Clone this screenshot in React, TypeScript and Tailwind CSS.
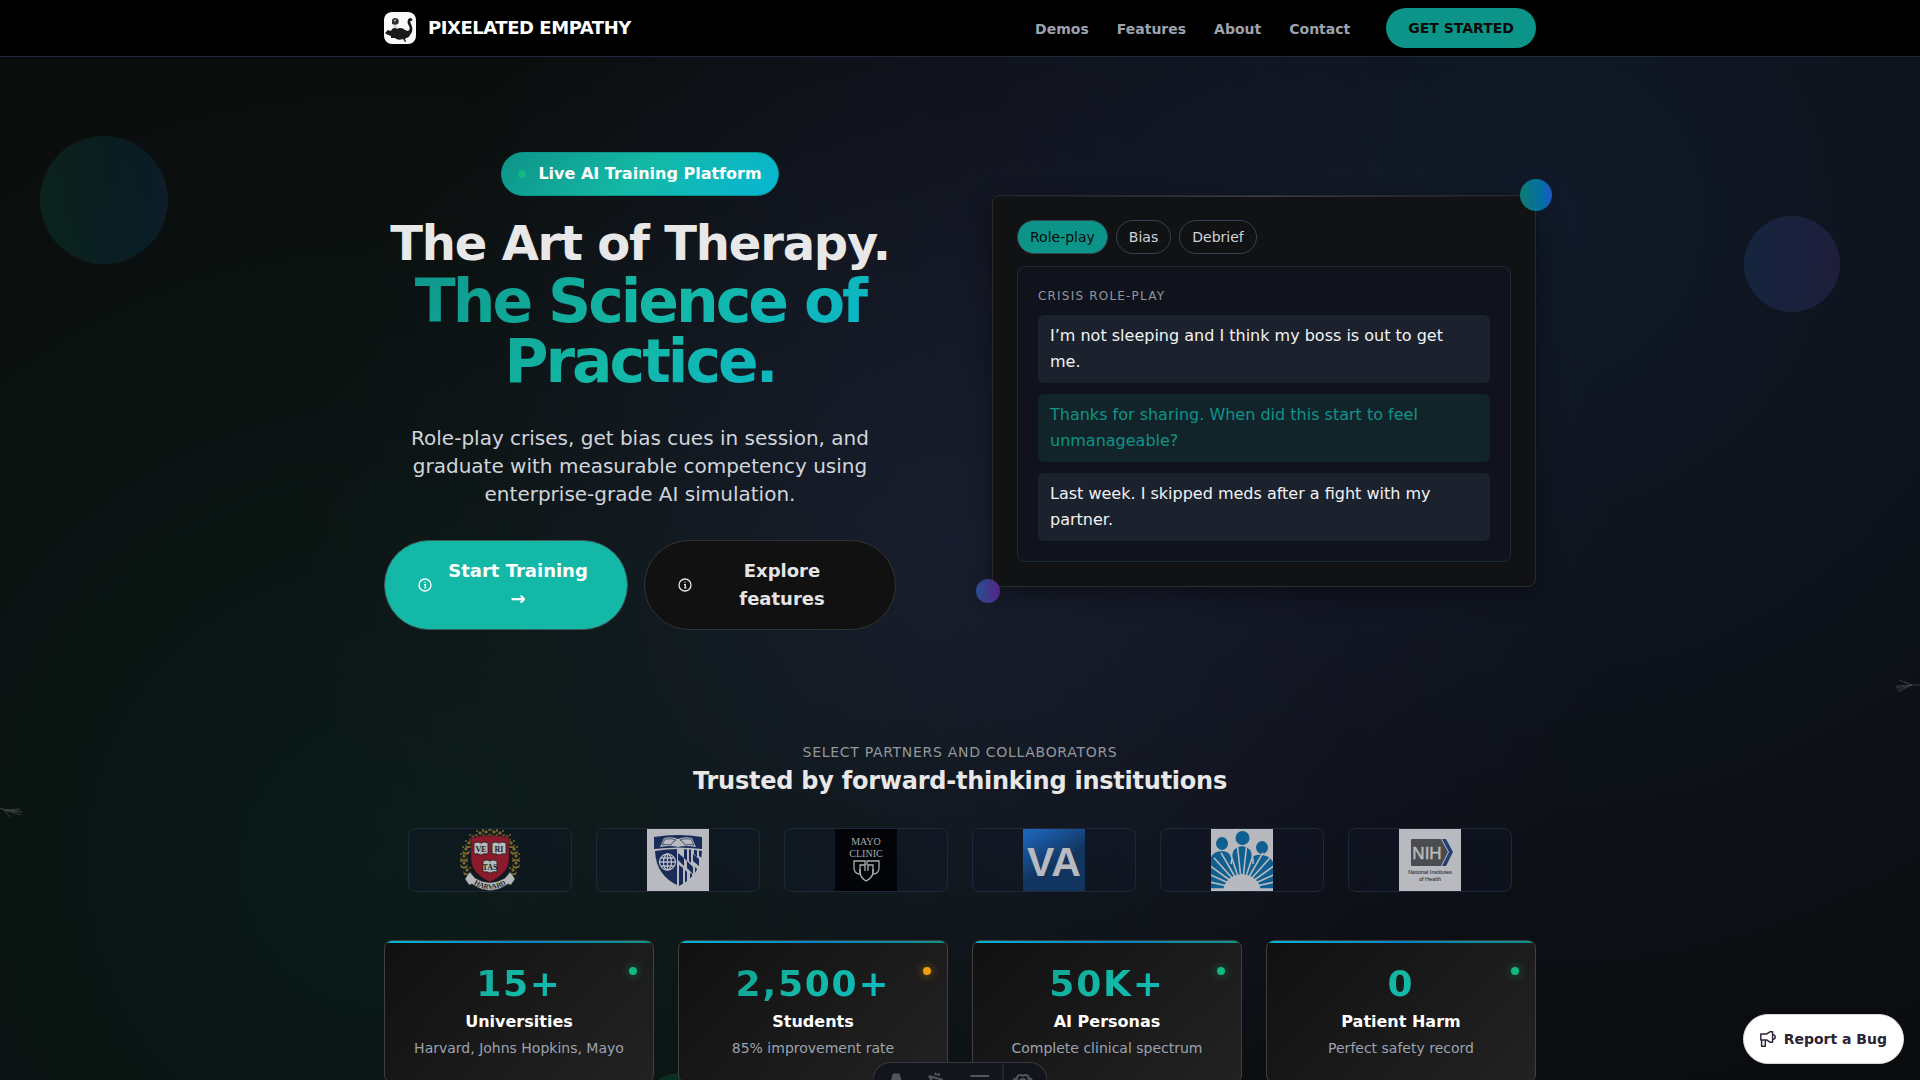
import React from "react";

const TEXT_GRADIENT = "bg-[linear-gradient(135deg,#0d9488_0%,#14b8a6_50%,#06b6d4_100%)] bg-clip-text text-transparent";

function BrandMark() {
  return (
    <svg viewBox="0 0 32 32" className="size-8 rounded-lg bg-[#f8fafb]" aria-hidden="true">
      <g fill="#1b1819">
        <path d="M1 21l3-3 3 1c1-3 4-4 6-2 3-2 6-1 8 1l3 1c2-1 2-3 1-5-2-3-2-7 1-8 2 0 3 2 2 3-2-1-2 1-1 3 2 4 2 8-1 11-1 2-2 3-4 3l-1 1 1 3-1 0-2-3c-3 1-6 1-8-1l-4 0 0-2c-3-1-5-2-6-3Z" />
        <path d="M8 9c0-3 3-4 6-2 1 1 1 4 0 5-2 1-4 1-6 0Z" opacity="0.9" />
        <path d="M10 8l2-1 0 2-2 1Z" fill="#9a9a9a" />
        <path d="M9 13l4 0 1 4-4 1Z" opacity="0.15" />
      </g>
    </svg>
  );
}

function InfoIcon() {
  return (
    <svg viewBox="0 0 16 16" className="size-4 shrink-0" fill="none" stroke="currentColor" strokeWidth="1.3" aria-hidden="true">
      <circle cx="8" cy="8" r="6" />
      <path d="M7 7.6h1.3v3.2M7.2 10.8h2.2" />
      <circle cx="8" cy="5.3" r="0.7" fill="currentColor" stroke="none" />
    </svg>
  );
}

function Laurel({ x, y }: { x: number; y: number }) {
  return (
    <g transform={`translate(${x} ${y})`}>
      <circle r="1.7" />
      <circle cx="-3" cy="-2" r="1" />
      <circle cx="3" cy="-2" r="1" />
      <path d="M-4 1q4 5 8 0l-1 4h-6Z" />
    </g>
  );
}

function HarvardLogo() {
  const books: [number, number, string][] = [
    [21, 19, "VE"],
    [39, 19, "RI"],
    [30, 37, "TAS"],
  ];
  const left: [number, number][] = [[9, 14], [6, 20], [4, 27], [4, 34], [7, 41], [13, 8], [20, 4], [26, 3]];
  return (
    <svg viewBox="0 0 60 62" className="h-[62px] w-[62px]" role="img" aria-label="Harvard">
      <g fill="#7b662d">
        {left.map(([x, y]) => (
          <React.Fragment key={`${x}-${y}`}>
            <Laurel x={x} y={y} />
            <Laurel x={60 - x} y={y} />
          </React.Fragment>
        ))}
      </g>
      <path d="M11 8q6 1 9-1h20q3 2 9 1v22q0 14-19 23Q11 44 11 30Z" fill="#8b1a2c" stroke="#4e1420" strokeWidth="0.8" />
      {books.map(([x, y, word]) => (
        <g key={word}>
          <path d={`M${x - 7} ${y - 5}q4-2 7 0q3-2 7 0v11q-4-1-7 1q-3-2-7-1Z`} fill="#b9bcbe" stroke="#252525" strokeWidth="0.9" />
          <path d={`M${x} ${y - 5}v12`} stroke="#777" strokeWidth="0.5" />
          <text x={x} y={y + 3.5} textAnchor="middle" fontSize="8" fontWeight="700" fontFamily="Liberation Serif, serif" fill="#222">
            {word}
          </text>
        </g>
      ))}
      <path d="M10 43q-3 3-5 7l4 6 3-1q18 13 36 0l3 1 4-6q-2-4-5-7l-5 6q-15 9-30 0Z" fill="#b5b8ba" stroke="#2c2c2c" strokeWidth="0.6" />
      <path id="harvard-ribbon" d="M11 53q19 14 38 0" fill="none" />
      <text fontSize="7" fontWeight="700" fontFamily="Liberation Serif, serif" fill="#222" textAnchor="middle">
        <textPath href="#harvard-ribbon" startOffset="50%">HARVARD</textPath>
      </text>
    </svg>
  );
}

function HopkinsLogo() {
  return (
    <svg viewBox="0 0 62 62" className="size-[62px] bg-[#b8babf]" role="img" aria-label="Johns Hopkins">
      <clipPath id="hopkins-shield">
        <path d="M8 22q24-4 47 0-1 24-23 35Q9 47 8 22Z" />
      </clipPath>
      <path d="M7 8q24-4 48 0v12q-24-3-48 0Z" fill="#192b59" />
      <path d="M17 9q8-2 14 1 7-3 14-1l4 9q-11-2-18 0-7-2-18 0Z" fill="#b8babf" />
      <path d="M18 10q7-1 11 1-4 2-5 5-5-1-9 0ZM44 10q-7-1-11 1 4 2 5 5 5-1 9 0Z" fill="none" stroke="#192b59" strokeWidth="0.7" />
      <g clipPath="url(#hopkins-shield)">
        <rect x="7" y="20" width="23" height="40" fill="#192b59" />
        <rect x="31.500" y="20" width="25" height="40" fill="#b8babf" />
        <g fill="#192b59">
          <path d="M32 36l4 3v20h-4Z" />
          <path d="M37 20h3v12l-3-3ZM42 20h2v14l-2-2ZM47 20h3v8l-3-3ZM52 20h4v10l-4-3Z" />
          <path d="M31 24l6 5v8l-6-6ZM40 32l6 6v7l-6-6ZM46 25l6 5v7l-6-5Z" />
          <path d="M38 41l2 2v13h-2ZM43 44l2 1v10h-2ZM48 38l2 2v12h-2Z" />
        </g>
      </g>
      <g fill="none" stroke="#b8babf" strokeWidth="1.300">
        <circle cx="20.500" cy="33" r="8" />
        <ellipse cx="20.500" cy="33" rx="4" ry="8" />
        <path d="M20.500 25v16M12.500 33h16M14 29h13M14 37h13" />
      </g>
    </svg>
  );
}

function MayoLogo() {
  return (
    <svg viewBox="0 0 62 62" className="size-[62px] bg-[#030407]" role="img" aria-label="Mayo Clinic">
      <g fill="#a9abae" fontFamily="Liberation Serif, serif" fontSize="10" textAnchor="middle">
        <text x="31" y="16">MAYO</text>
        <text x="31" y="28">CLINIC</text>
      </g>
      <g fill="none" stroke="#a9abae" strokeWidth="1.300">
        <path d="M30 36V32H19v7q0 5 5 6M32 36V32h12v7q0 5-5 6" />
        <path d="M25 46V36h5v6M38 46V36h-5v6" />
        <path d="M25 40v4q1 5 6 8 6-3 7-8v-4" />
      </g>
    </svg>
  );
}

function VaLogo() {
  return (
    <svg viewBox="0 0 62 62" className="size-[62px] bg-[linear-gradient(150deg,#1c67bd_0%,#1b5ca9_15%,#12355f_55%,#12355f_100%)]" role="img" aria-label="VA">
      <text x="31" y="47" textAnchor="middle" fontFamily="Liberation Sans, sans-serif" fontWeight="700" fontSize="41" fill="#b8babf">
        VA
      </text>
    </svg>
  );
}

function PeopleLogo() {
  const rays = [0, 12, 24, 36, 48, 60, 72, 84, 96, 108, 120, 132, 144, 156, 168, 180];
  return (
    <svg viewBox="0 0 62 62" className="size-[62px] bg-[#b8b9bf]" role="img" aria-label="Community health">
      <g fill="#0f6090">
        <ellipse cx="31.500" cy="9" rx="7" ry="7" />
        <ellipse cx="11" cy="14.500" rx="6" ry="6.500" />
        <ellipse cx="51" cy="18.500" rx="6" ry="6.500" />
        <path d="M0 28q3-6 11-6 7 0 10 7 0-11 10-12 10 1 10 12 3-4 10-3 8 1 11 7v27H0Z" />
      </g>
      <g stroke="#b8b9bf" strokeWidth="1.600">
        {rays.map((angle) => (
          <path key={angle} d="M31 60h-42" transform={`rotate(${angle} 31 60)`} />
        ))}
      </g>
      <path d="M21 30l-1 5M42 29v6" stroke="#b8b9bf" strokeWidth="1.600" />
      <path d="M12 62q2-15 19-17 17 2 19 17Z" fill="#b8b9bf" />
    </svg>
  );
}

function NihLogo() {
  return (
    <svg viewBox="0 0 62 62" className="size-[62px] bg-[#b8babf]" role="img" aria-label="National Institutes of Health">
      <path d="M13 10h29l7 13-7 14H13q-1 0-1-1V11q0-1 1-1Z" fill="#4a4c51" />
      <path d="M43 10h4l7 13-7 14h-4l7-14Z" fill="#213f73" />
      <text x="28" y="29.500" textAnchor="middle" fontFamily="Liberation Sans, sans-serif" fontSize="17" fill="#b8babf" stroke="#b8babf" strokeWidth="0.500">
        NIH
      </text>
      <g fontFamily="Liberation Sans, sans-serif" fontSize="5.500" fill="#43454a" stroke="#43454a" strokeWidth="0.150" textAnchor="middle">
        <text x="31" y="45">National Institutes</text>
        <text x="31" y="51.500">of Health</text>
      </g>
    </svg>
  );
}

function MegaphoneIcon() {
  return (
    <svg viewBox="0 0 20 20" className="size-4" fill="none" stroke="currentColor" strokeWidth="1.800" strokeLinejoin="round" aria-hidden="true">
      <path d="M1 3.700h7.300L12.400 1h3.300v13h-3.300l-4.100-2.800H1Z" />
      <path d="M2 11.200V19h4.600v-7.800M15.700 4.200c4.500 1 4.500 5.600 0 6.600" />
    </svg>
  );
}

const stats = [
  { value: "15+", label: "Universities", note: "Harvard, Johns Hopkins, Mayo", dot: "bg-[#10b981] shadow-[0_0_10px_#10b98199]" },
  { value: "2,500+", label: "Students", note: "85% improvement rate", dot: "bg-[#f59e0b] shadow-[0_0_10px_#f59e0b99]" },
  { value: "50K+", label: "AI Personas", note: "Complete clinical spectrum", dot: "bg-[#10b981] shadow-[0_0_10px_#10b98199]" },
  { value: "0", label: "Patient Harm", note: "Perfect safety record", dot: "bg-[#10b981] shadow-[0_0_10px_#10b98199]" },
];

const logos = [HarvardLogo, HopkinsLogo, MayoLogo, VaLogo, PeopleLogo, NihLogo];

const messages = [
  { text: "I’m not sleeping and I think my boss is out to get me.", tone: "bg-[#1c222d] text-[#f1f2f4]" },
  { text: "Thanks for sharing. When did this start to feel unmanageable?", tone: "bg-[#12242a] text-[#0d9488]" },
  { text: "Last week. I skipped meds after a fight with my partner.", tone: "bg-[#1c222d] text-[#f1f2f4]" },
];

function Header() {
  return (
    <header className="relative border-b border-[#1e293b] bg-black">
      <div className="mx-auto flex h-14 max-w-6xl items-center justify-between">
        <a href="#home" className="flex items-center gap-3 text-lg font-bold tracking-tight text-white">
          <BrandMark />
          PIXELATED EMPATHY
        </a>
        <div className="flex items-center gap-9 text-sm font-semibold">
          <nav className="flex gap-7 pt-0.5 text-[#9ca3af]">
            <a href="#demos">Demos</a>
            <a href="#features">Features</a>
            <a href="#about">About</a>
            <a href="#contact">Contact</a>
          </nav>
          <a href="#start" className="flex h-10 items-center rounded-[20px] bg-[#0d9488] px-[22px] text-[#0a0a0a]">
            GET STARTED
          </a>
        </div>
      </div>
    </header>
  );
}

function DemoCard() {
  return (
    <div className="relative rounded-lg border border-[#2a2a2b] bg-[#111213] p-6 shadow-[0_8px_24px_rgba(0,0,0,0.4)]">
      <div className="absolute inset-x-0 top-0 h-px bg-[linear-gradient(90deg,transparent,#ffffff33,transparent)]" />
      <div className="flex gap-2 text-sm">
        <button type="button" className="h-[34px] rounded-full border border-[#334155] bg-[#0d9488] px-3 text-[#0a0a0a]">Role-play</button>
        <button type="button" className="h-[34px] rounded-full border border-[#334155] px-3 text-[#d1d5db]">Bias</button>
        <button type="button" className="h-[34px] rounded-full border border-[#334155] px-3 text-[#d1d5db]">Debrief</button>
      </div>
      <div className="mt-3 rounded-lg border border-[#1e293b] bg-[#10131b] p-5">
        <p className="text-xs leading-[18px] tracking-widest text-[#9095a0]">CRISIS ROLE-PLAY</p>
        <div className="mt-2.5 flex flex-col gap-[11px]">
          {messages.map((message) => (
            <p key={message.text} className={`rounded-md px-3 py-2 leading-[26px] ${message.tone}`}>
              {message.text}
            </p>
          ))}
        </div>
      </div>
      <div className="absolute -top-[17px] -right-[17px] size-8 rounded-full bg-[linear-gradient(90deg,#0d9488,#0284c7_70%,#2563eb)] opacity-80" />
      <div className="absolute -bottom-[17px] -left-[17px] size-6 rounded-full bg-[linear-gradient(90deg,#3b82f6,#9333ea)] opacity-50" />
    </div>
  );
}

function Hero() {
  return (
    <section className="grid grid-cols-[16fr_17fr] items-center gap-24 pt-[95px]">
      <div className="flex flex-col items-center text-center">
        <div className="flex h-11 items-center gap-3 rounded-[22px] border border-[#0d9488] bg-[linear-gradient(135deg,#0d9488_0%,#14b8a6_50%,#06b6d4_100%)] px-4 font-semibold text-white">
          <span className="size-2 rounded-full bg-[#10b981]" />
          Live AI Training Platform
        </div>
        <h1 className="mt-[21px] font-bold">
          <span className="block pb-0.5 text-5xl leading-[52px] tracking-tight text-[#e8e8e8]">The Art of Therapy.</span>
          <span className={`block text-6xl leading-[60px] tracking-tighter ${TEXT_GRADIENT}`}>The Science of Practice.</span>
        </h1>
        <p className="mt-[33px] max-w-[480px] text-xl leading-7 text-[#d1d5db]">
          Role-play crises, get bias cues in session, and graduate with measurable competency using enterprise-grade AI simulation.
        </p>
        <div className="mt-8 grid w-full grid-cols-[61fr_63fr] gap-4 text-lg leading-7 font-semibold">
          <a href="#start" className="flex items-center gap-2 rounded-[45px] border border-[#3b5d5a] bg-[#14b8a6] px-8 py-4 text-white">
            <InfoIcon />
            <span className="flex-1">Start Training<br />→</span>
          </a>
          <a href="#features" className="flex items-center gap-2 rounded-[45px] border border-[#333333] bg-[#111111] px-8 py-4 text-[#e5e5e5]">
            <InfoIcon />
            <span className="flex-1">Explore<br />features</span>
          </a>
        </div>
      </div>
      <DemoCard />
    </section>
  );
}

function Partners() {
  return (
    <section className="mt-28 px-6 text-center">
      <p className="text-sm tracking-wider text-[#94979c]">SELECT PARTNERS AND COLLABORATORS</p>
      <h2 className="mt-1 text-2xl leading-[30px] font-bold tracking-[-0.01em] text-[#e8e8e8]">Trusted by forward-thinking institutions</h2>
      <div className="mt-8 grid grid-cols-6 gap-6">
        {logos.map((Logo, index) => (
          <div key={index} className="flex h-16 items-center justify-center rounded-lg border border-[#1e293b] bg-[#0f172a]/30">
            <Logo />
          </div>
        ))}
      </div>
    </section>
  );
}

function Stats() {
  return (
    <section className="mt-12 grid grid-cols-4 gap-6 text-center">
      {stats.map((stat) => (
        <article key={stat.label} className="relative overflow-hidden rounded-lg border border-[#404040] bg-[linear-gradient(135deg,#111111,#222222)] pt-[23px] pb-6">
          <div className="absolute inset-x-0 top-0 h-0.5 bg-[linear-gradient(90deg,#06b6d4,#0284c7_50%,#0d9488)]" />
          <span className={`absolute top-[26px] right-4 size-2 rounded-full ${stat.dot}`} />
          <p className="text-4xl leading-10 font-bold tracking-wider">
            <span className={`block ${TEXT_GRADIENT}`}>{stat.value}</span>
          </p>
          <h3 className="mt-1.5 font-semibold text-white">{stat.label}</h3>
          <p className="mt-1 text-sm text-[#9ca3af]">{stat.note}</p>
        </article>
      ))}
    </section>
  );
}

function DevToolbar() {
  return (
    <div className="absolute bottom-0 left-1/2 flex h-[18px] w-[175px] -translate-x-1/2 items-start overflow-hidden rounded-t-[18px] border border-b-0 border-[#343841] bg-[#13151a] text-[#53565b]">
      <svg viewBox="0 0 175 18" className="h-[18px] w-full" fill="none" stroke="currentColor" aria-hidden="true">
        <path d="M18 18l2-7h6l2 7Z" fill="currentColor" />
        <path d="M56 13l14 4M56 13l4 6M62 10l2 2M66 10v3" strokeWidth="2" />
        <path d="M98 13h19M111 18h3" strokeWidth="2" />
        <path d="M131 0v18" stroke="#343841" />
        <path d="M142 18q0-3 3-2 0-4 4-4l2 1 2-1q4 0 4 4 3-1 3 2" strokeWidth="2" />
        <circle cx="151" cy="19" r="3" strokeWidth="2" />
      </svg>
    </div>
  );
}

function Ambient() {
  return (
    <div className="pointer-events-none absolute inset-0 overflow-hidden" aria-hidden="true">
      <div className="absolute top-[136px] left-10 size-32 rounded-full bg-[linear-gradient(90deg,#10b981,#0891b2_50%,#0284c7_85%,#3b82f6)] opacity-[0.12]" />
      <div className="absolute top-[216px] right-20 size-24 rounded-full bg-[linear-gradient(90deg,#3b82f6,#8b5cf6)] opacity-[0.13]" />
      <div className="absolute -bottom-[73px] left-[640px] size-20 rounded-full bg-[#10b981] opacity-15" />
      <svg viewBox="0 0 26 16" className="absolute top-[678px] right-0 h-4 w-[26px]" fill="none" stroke="#3b4149" strokeWidth="0.800">
        <path d="M26 7H18L5 2M18 7L10 4M18 7L1 10M18 7L3 12M18 7L4 14M18 7L2 8" />
      </svg>
      <svg viewBox="0 0 22 12" className="absolute top-[806px] left-0 h-3 w-[22px]" fill="none" stroke="#3f4746" strokeWidth="0.800">
        <path d="M0 2l5 2 15-1M0 2l7 3 15 1M5 4l16 5M4 4l6 7M5 4l14 1" />
      </svg>
    </div>
  );
}

export default function App() {
  return (
    <div className="relative h-screen overflow-hidden bg-[#0a0a0a] bg-[radial-gradient(circle_at_20%_80%,rgba(20,184,150,0.1)_0%,transparent_55%),radial-gradient(circle_at_80%_20%,rgba(59,130,246,0.13)_0%,transparent_60%),radial-gradient(circle_at_50%_50%,rgba(130,90,220,0.1)_0%,transparent_60%)] font-['DejaVu_Sans',sans-serif] text-base">
      <Ambient />
      <Header />
      <main className="relative mx-auto max-w-6xl">
        <Hero />
        <Partners />
        <Stats />
      </main>
      <DevToolbar />
      <button type="button" className="absolute right-4 bottom-4 flex h-[50px] items-center gap-2 rounded-[25px] border border-[#d9d7dc] bg-white px-4 text-sm font-semibold text-[#2b2233]">
        <MegaphoneIcon />
        Report a Bug
      </button>
    </div>
  );
}
